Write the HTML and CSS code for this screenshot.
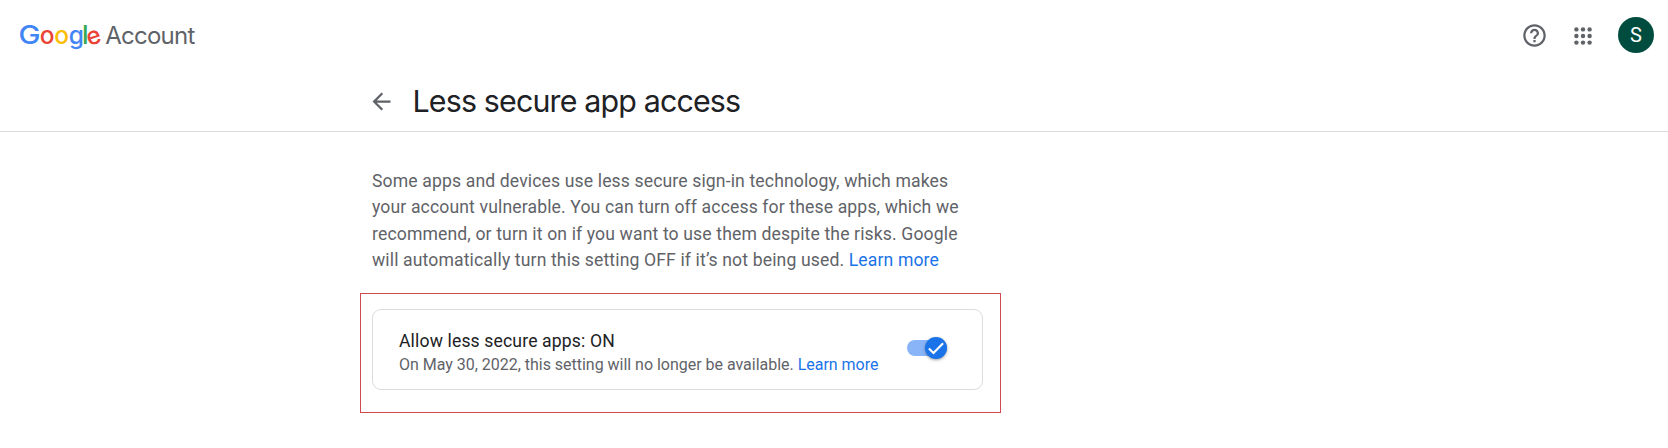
FILE: index.html
```html
<!DOCTYPE html>
<html lang="en">
<head>
<meta charset="utf-8">
<title>Less secure app access</title>
<link rel="stylesheet" href="styles.css">
</head>
<body>
<header class="topbar">
  <svg class="logo" width="200" height="40" viewBox="0 0 200 40" role="img" aria-label="Google Account">
    <g class="brand">
      <text class="blue initial" x="-1.500" y="28" textLength="22" lengthAdjust="spacingAndGlyphs">G</text>
      <text class="red" x="19.800" y="28">o</text>
      <text class="yellow" x="34.200" y="28">o</text>
      <text class="blue" x="48.800" y="28">g</text>
      <text class="green stem" x="62" y="28">l</text>
      <text class="red" x="66.700" y="28" transform="rotate(-18 74 21.500)">e</text>
    </g>
    <text class="product" x="85.300" y="28" textLength="90">Account</text>
  </svg>
  <nav class="actions">
    <svg class="help" width="27" height="27" viewBox="0 0 24 24"><path d="M11 18h2v-2h-2v2zm1-16C6.480 2 2 6.480 2 12s4.480 10 10 10 10-4.480 10-10S17.520 2 12 2zm0 18c-4.410 0-8-3.590-8-8s3.590-8 8-8 8 3.590 8 8-3.590 8-8 8zm0-14c-2.210 0-4 1.790-4 4h2c0-1.100.9-2 2-2s2 .9 2 2c0 2-3 1.750-3 5h2c0-2.250 3-2.500 3-5 0-2.210-1.790-4-4-4z"/></svg>
    <svg class="apps" width="26" height="26" viewBox="0 0 26 26"><circle cx="6.400" cy="6.400" r="2.200"/><circle cx="13" cy="6.400" r="2.200"/><circle cx="19.600" cy="6.400" r="2.200"/><circle cx="6.400" cy="13" r="2.200"/><circle cx="13" cy="13" r="2.200"/><circle cx="19.600" cy="13" r="2.200"/><circle cx="6.400" cy="19.600" r="2.200"/><circle cx="13" cy="19.600" r="2.200"/><circle cx="19.600" cy="19.600" r="2.200"/></svg>
    <span class="avatar">S</span>
  </nav>
</header>
<div class="titlebar">
  <svg class="back" width="27" height="27" viewBox="0 0 24 24"><path d="M20 11H7.830l5.590-5.590L12 4l-8 8 8 8 1.410-1.410L7.830 13H20v-2z"/></svg>
  <h1 class="title">Less secure app access</h1>
</div>
<main class="content">
  <p class="intro">Some apps and devices use less secure sign-in technology, which makes<br>your account vulnerable. You can turn off access for these apps, which we<br>recommend, or turn it on if you want to use them despite the risks. Google<br>will automatically turn this setting OFF if it’s not being used. <a class="link">Learn more</a></p>
  <section class="highlight">
    <div class="card">
      <div class="setting">
        <div class="name">Allow less secure apps: ON</div>
        <div class="note">On May 30, 2022, this setting will no longer be available. <a class="link">Learn more</a></div>
      </div>
      <div class="toggle"><span class="thumb"><svg width="20" height="20" viewBox="0 0 24 24"><path d="M3.500 12.500l5.500 5.500L20.500 6.200"/></svg></span></div>
    </div>
  </section>
</main>
</body>
</html>
```
FILE: styles.css
```css
* { box-sizing: border-box; }
body { margin: 0; background: #fff; color: #202124; font-family: Roboto, sans-serif; }
.topbar { height: 71px; padding: 0 14px 0 20px; display: flex; align-items: center; justify-content: space-between; }
.logo { display: block; overflow: visible; margin-top: 1px; }
.brand { font: 500 24.500px Inter, sans-serif; }
.initial { font-size: 26px; }
.stem { font-size: 26px; }
.product { font: 400 24px Inter, sans-serif; fill: #5f6368; }
.blue { fill: #4285f4; }
.red { fill: #ea4335; }
.yellow { fill: #fbbc04; }
.green { fill: #34a853; }
.actions { display: flex; align-items: center; }
.help, .apps, .back { display: block; fill: #5f6368; }
.apps { margin: 0 22px 0 22px; }
.avatar { width: 36px; height: 36px; margin-bottom: 1px; border-radius: 50%; background: #004d40; color: #fff; font-size: 20px; line-height: 37px; text-align: center; }
.titlebar { height: 61px; padding: 1px 0 0 368px; border-bottom: 1px solid #dadce0; display: flex; align-items: center; }
.title { margin: 0 0 2px 17.500px; font: 400 30.400px/40px Inter, sans-serif; letter-spacing: -0.840px; white-space: nowrap; }
.content { width: 641px; margin-left: 360px; padding-top: 36px; }
.intro { margin: 0; padding-left: 12px; font-size: 17.600px; line-height: 26.400px; letter-spacing: 0.130px; color: #5f6368; white-space: nowrap; }
.link { color: #1a73e8; }
.highlight { margin-top: 19px; height: 120px; padding: 15px 17px 0 11px; border: 1px solid #cf4b50; }
.card { height: 81px; padding: 0 35px 0 26px; border: 1px solid #dadce0; border-radius: 9px; display: flex; align-items: center; justify-content: space-between; }
.setting { white-space: nowrap; padding-top: 6px; }
.name { font-size: 17.600px; line-height: 25px; letter-spacing: 0.140px; }
.note { font-size: 16px; line-height: 22px; letter-spacing: -0.020px; color: #5f6368; }
.toggle { width: 40px; height: 16px; border-radius: 8px; background: #8ab4f8; display: flex; align-items: center; justify-content: flex-end; margin-bottom: 3px; }
.thumb { flex: none; width: 22px; height: 22px; border-radius: 50%; background: #1a73e8; box-shadow: 0 1px 3px rgba(60, 64, 67, .5); display: flex; align-items: center; justify-content: center; }
.thumb path { fill: none; stroke: #fff; stroke-width: 2.500; }
```
